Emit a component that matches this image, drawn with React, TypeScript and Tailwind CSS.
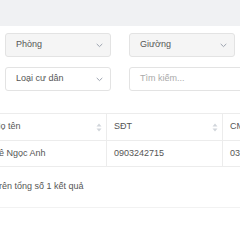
import React from "react";

function Chevron() {
  return (
    <svg width="7" height="5" viewBox="0 0 7 5" fill="none" className="shrink-0">
      <path d="M1 1.2 L3.5 3.6 L6 1.2" stroke="#9ca3af" strokeWidth="1" strokeLinecap="round" strokeLinejoin="round" />
    </svg>
  );
}

function Sort() {
  return (
    <svg width="6" height="9" viewBox="0 0 6 9" className="shrink-0">
      <path d="M3 0.5 L5.5 3.5 L0.5 3.5 Z" fill="#d1d5db" />
      <path d="M3 8.5 L5.5 5.5 L0.5 5.5 Z" fill="#d1d5db" />
    </svg>
  );
}

function Select({ label, gray }: { label: string; gray?: boolean }) {
  return (
    <div
      className={`flex h-[24px] w-[106px] shrink-0 items-center justify-between rounded-[3px] border border-[#e3e3e3] pl-[10px] pr-[7px] text-[9px] text-[#555] ${
        gray ? "bg-[#f5f5f5]" : "bg-white"
      }`}
    >
      <span className="whitespace-nowrap">{label}</span>
      <Chevron />
    </div>
  );
}

export default function App() {
  return (
    <div
      className="h-[250px] w-[240px] overflow-hidden bg-white"
      style={{ fontFamily: '"Liberation Sans", Arial, sans-serif' }}
    >
      <div className="h-[26px] bg-[#f0f1f3]" />
      <div className="flex flex-col gap-[10px] pl-[5px] pt-[7px]">
        <div className="flex gap-[18px]">
          <Select label="Phòng" gray />
          <Select label="Giường" gray />
        </div>
        <div className="flex gap-[18px]">
          <Select label="Loại cư dân" />
          <div className="flex h-[24px] w-[150px] shrink-0 items-center rounded-[3px] border border-[#e3e3e3] bg-white pl-[10px] text-[9px] text-[#aaa]">
            Tìm kiếm...
          </div>
        </div>
      </div>
      <div className="ml-[-14px] mt-[22px] w-[360px] border-t border-[#ececec] text-[9px] text-[#555]">
        <div className="flex h-[27px] items-center border-b border-[#ececec]">
          <div className="flex h-full w-[121px] items-center justify-between border-r border-[#ececec] pl-[8px] pr-[4px]">
            <span>Họ tên</span>
            <Sort />
          </div>
          <div className="flex h-full w-[116px] items-center justify-between border-r border-[#ececec] pl-[7px] pr-[4px]">
            <span>SĐT</span>
            <Sort />
          </div>
          <div className="flex h-full w-[110px] items-center pl-[7px]">
            <span>CMND</span>
          </div>
        </div>
        <div className="flex h-[26px] items-center border-b border-[#ececec]">
          <div className="flex h-full w-[121px] items-center border-r border-[#ececec] pl-[8px]">
            <span>Lê Ngọc Anh</span>
          </div>
          <div className="flex h-full w-[116px] items-center border-r border-[#ececec] pl-[7px]">
            <span>0903242715</span>
          </div>
          <div className="flex h-full w-[110px] items-center pl-[7px]">
            <span>036123456</span>
          </div>
        </div>
      </div>
      <div className="ml-[-52px] flex h-[41px] w-[400px] items-center border-b border-[#f2f2f2] pl-[8px] text-[9px] text-[#555]">
        <span className="whitespace-nowrap">Hiển thị 1 trên tổng số 1 kết quả</span>
      </div>
    </div>
  );
}
